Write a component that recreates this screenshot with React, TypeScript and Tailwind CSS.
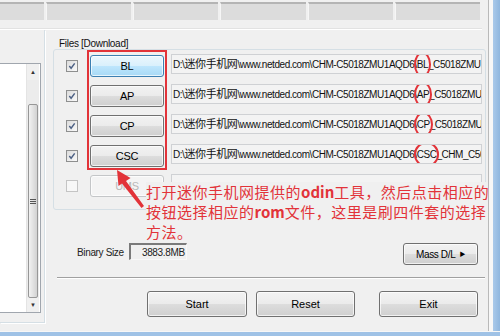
import React from "react";

const RED = "#e23339";

function Check({ checked }: { checked: boolean }) {
  return (
    <div
      className={
        "shrink-0 w-[12px] h-[12px] border flex items-center justify-center " +
        (checked
          ? "border-[#8e8f8f] bg-[linear-gradient(135deg,#dcdcdc,#fafafa)]"
          : "border-[#c4c4c4] bg-[#f7f7f7]")
      }
    >
      {checked && (
        <svg width="8" height="8" viewBox="0 0 9 9">
          <path d="M1.5 4.5 L3.5 7 L7.5 1.5" stroke="#4d6185" strokeWidth="1.6" fill="none" />
        </svg>
      )}
    </div>
  );
}

function WinButton({
  children,
  className = "",
  focused = false,
  disabled = false,
}: {
  children?: React.ReactNode;
  className?: string;
  focused?: boolean;
  disabled?: boolean;
}) {
  let style =
    "border-[#707070] bg-[linear-gradient(#f2f2f2,#ebebeb_50%,#dddddd_50%,#cfcfcf)] text-black";
  if (focused)
    style =
      "border-[#3c7fb1] bg-[linear-gradient(#eaf6fd,#d9f0fc_50%,#bee6fd_50%,#a7d9f5)] text-black";
  if (disabled) style = "border-[#c4c6c8] bg-[#f4f4f4] text-[#b8b8b8]";
  return (
    <div
      className={
        "shrink-0 border rounded-[3px] shadow-[inset_0_0_0_1px_rgba(255,255,255,0.7)] flex items-center justify-center " +
        style +
        " " +
        className
      }
    >
      {children}
    </div>
  );
}

function Circled({ children }: { children: React.ReactNode }) {
  return (
    <span className="relative">
      {children}
      <span
        className="absolute -left-[3px] -right-[3px] -top-[5px] -bottom-[5px] rounded-[50%] border-2"
        style={{ borderColor: RED }}
      />
    </span>
  );
}

function FileField({ tag, tail }: { tag?: string; tail?: string }) {
  return (
    <div className="relative w-[311px] shrink-0 h-[20px] -mt-[1px] self-start border border-[#cfd1d4] bg-[#f3f3f3] overflow-hidden">
      <div className="absolute left-[1px] top-0 h-[18px] flex items-center whitespace-nowrap text-[10px] tracking-[-0.45px] text-[#111]">
        {tag && (
          <>
            <span>D:\</span>
            <span className="text-[11px] tracking-[-0.4px]">迷你手机网</span>
            <span>{"\\www.netded.com\\CHM-C5018ZMU1AQD6\\"}</span>
            <Circled>{tag}</Circled>
            <span>{tail}</span>
          </>
        )}
      </div>
    </div>
  );
}

const rows: { label: string; tag?: string; tail?: string; checked: boolean; focused?: boolean; disabled?: boolean }[] = [
  { label: "BL", tag: "BL", tail: "_C5018ZMU1AQD6_CL123456.tar.md5", checked: true, focused: true },
  { label: "AP", tag: "AP", tail: "_C5018ZMU1AQD6_CL123456.tar.md5", checked: true },
  { label: "CP", tag: "CP", tail: "_C5018ZMU1AQD6_CL123456.tar.md5", checked: true },
  { label: "CSC", tag: "CSC", tail: "_CHM_C5018ZMU1AQD6_CL123456.tar.md5", checked: true },
  { label: "UMS", checked: false, disabled: true },
];

export default function App() {
  return (
    <div className="relative w-[500px] h-[336px] overflow-hidden bg-[#f0f0f0] grid grid-cols-[488px_12px] grid-rows-[331px_5px] font-['Liberation_Sans','Noto_Sans_CJK_SC',sans-serif] text-[11px] text-black">
      {/* main content */}
      <div className="flex flex-col overflow-hidden">
        {/* top status boxes */}
        <div className="h-[28px] shrink-0 pt-[2px] flex gap-[2px] pr-[8px]">
          <div className="w-[44px] h-[18px] bg-[#dcdcdc] border-t-2 border-[#b4b4b4]" />
          {[0, 1, 2, 3, 4].map((i) => (
            <div key={i} className="flex-1 h-[18px] bg-[#dcdcdc] border-t-2 border-[#b4b4b4] border-l border-l-[#f6f6f6]" />
          ))}
        </div>
        <div className="h-px shrink-0 bg-[#e2e2e2] mr-[6px]" />
        <div className="h-px shrink-0 bg-white mr-[6px]" />

        <div className="grid grid-cols-[49px_439px] h-[301px]">
          {/* left log panel */}
          <div className="flex flex-col pb-[8px]">
            <div className="flex-1 mr-[4px] border-r border-b border-[#d5dfe5] shadow-[1px_1px_0_#ffffff] pt-[33px] pr-[3px] pb-[9px]">
              <div className="h-full bg-white border-t border-r border-b border-[#a0a6ae] flex justify-end pr-[1px]">
                <div className="w-[13px] h-full flex flex-col bg-[#ececec] border-l border-[#e4e4e4]">
                  <div className="h-[16px] flex items-center justify-center text-[6px] text-[#333] bg-[#f0f0f0]">▲</div>
                  <div className="h-[24px]" />
                  <div className="flex-1 mx-[1px] rounded-[2px] border border-[#979797] bg-[linear-gradient(90deg,#f2f2f2,#e2e2e2,#d2d2d2)] flex items-center justify-center">
                    <div className="flex flex-col gap-[1px]">
                      <div className="w-[6px] h-px bg-[#555]" />
                      <div className="w-[6px] h-px bg-[#555]" />
                      <div className="w-[6px] h-px bg-[#555]" />
                    </div>
                  </div>
                  <div className="h-[14px] flex items-center justify-center text-[6px] text-[#333] bg-[#f0f0f0]">▼</div>
                </div>
              </div>
            </div>
          </div>

          {/* right area */}
          <div className="flex flex-col overflow-hidden">
            <div className="w-[433px] ml-[4px] mt-[9px] flex flex-col">
              <div className="h-[10px] flex items-end">
                <span className="ml-[5px] px-[1px] text-[10px] tracking-[-0.3px] leading-[10px] text-[#111]">Files [Download]</span>
              </div>
              <div className="border border-[#d5dfe5] rounded-[3px] pl-[12px] pr-[3px] pt-[5px] pb-[12px] flex flex-col gap-[8px]">
                {rows.map((r) => (
                  <div key={r.label} className="flex items-center h-[22px]">
                    <Check checked={r.checked} />
                    <WinButton
                      focused={r.focused}
                      disabled={r.disabled}
                      className="ml-[12px] w-[74px] h-[22px] text-[11px] tracking-[-0.3px]"
                    >
                      {r.label}
                    </WinButton>
                    <div className="w-[7px] shrink-0" />
                    <FileField tag={r.tag} tail={r.tail} />
                  </div>
                ))}
              </div>
            </div>

            <div className="mt-[33px] flex items-start h-[23px]">
              <div className="ml-[28px] mt-[2px] text-[10px] tracking-[-0.35px] text-[#222]">Binary Size</div>
              <div className="ml-[5px] w-[58px] h-[17px] border-t-2 border-l-2 border-[#7a7a7a] border-b border-r border-b-[#f8f8f8] border-r-[#f8f8f8] flex items-center justify-end pr-[1px] text-[10px] tracking-[-0.35px] text-[#222]">
                3883.8MB
              </div>
              <div className="flex-1" />
              <WinButton className="mr-[10px] w-[75px] h-[22px] text-[10px] tracking-[-0.35px] gap-[4px]">
                <span>Mass D/L</span>
                <span className="text-[6px]">▶</span>
              </WinButton>
            </div>

            <div className="mt-[11px] ml-[8px] mr-[3px] h-[2px] border-t border-[#a0a0a0] border-b border-b-white" />

            <div className="mt-[12px] flex">
              <WinButton className="ml-[98px] w-[100px] h-[26px] text-[11px]">Start</WinButton>
              <WinButton className="ml-[9px] w-[99px] h-[26px] text-[11px]">Reset</WinButton>
              <WinButton className="ml-[24px] w-[99px] h-[26px] text-[11px]">Exit</WinButton>
            </div>
          </div>
        </div>
      </div>

      {/* right window frame */}
      <div className="flex">
        <div className="w-px bg-[#b9b9b9]" />
        <div className="w-[4px] bg-[#f7f7f7]" />
        <div className="flex-1 bg-[linear-gradient(90deg,#a9c9ea,#8fb6de)]" />
      </div>

      {/* bottom window frame */}
      <div className="col-span-2 flex flex-col">
        <div className="h-px bg-[#f7f7f7]" />
        <div className="flex-1 bg-[#9fc2e6]" />
      </div>

      {/* annotation overlays */}
      <div
        className="absolute left-[87px] top-[50px] w-[80px] h-[120px] border-2"
        style={{ borderColor: RED }}
      />
      <svg className="absolute left-0 top-0" width="500" height="336">
        <polygon points="117,170 130.5,178 126,181 144,206 141.5,208 122,183.5 118.5,186" fill={RED} />
      </svg>
      <div
        className="absolute left-[146px] top-[182px] w-[342px] whitespace-nowrap bg-[#f0f0f0] text-[15px] leading-[20px] tracking-[0.5px] font-['Noto_Sans_CJK_SC',sans-serif]"
        style={{ color: RED }}
      >
        打开迷你手机网提供的<b className="font-bold tracking-normal">odin</b>工具，然后点击相应的
        <br />
        按钮选择相应的<b className="font-bold tracking-normal">rom</b>文件，这里是刷四件套的选择
        <br />
        方法。
      </div>
    </div>
  );
}
